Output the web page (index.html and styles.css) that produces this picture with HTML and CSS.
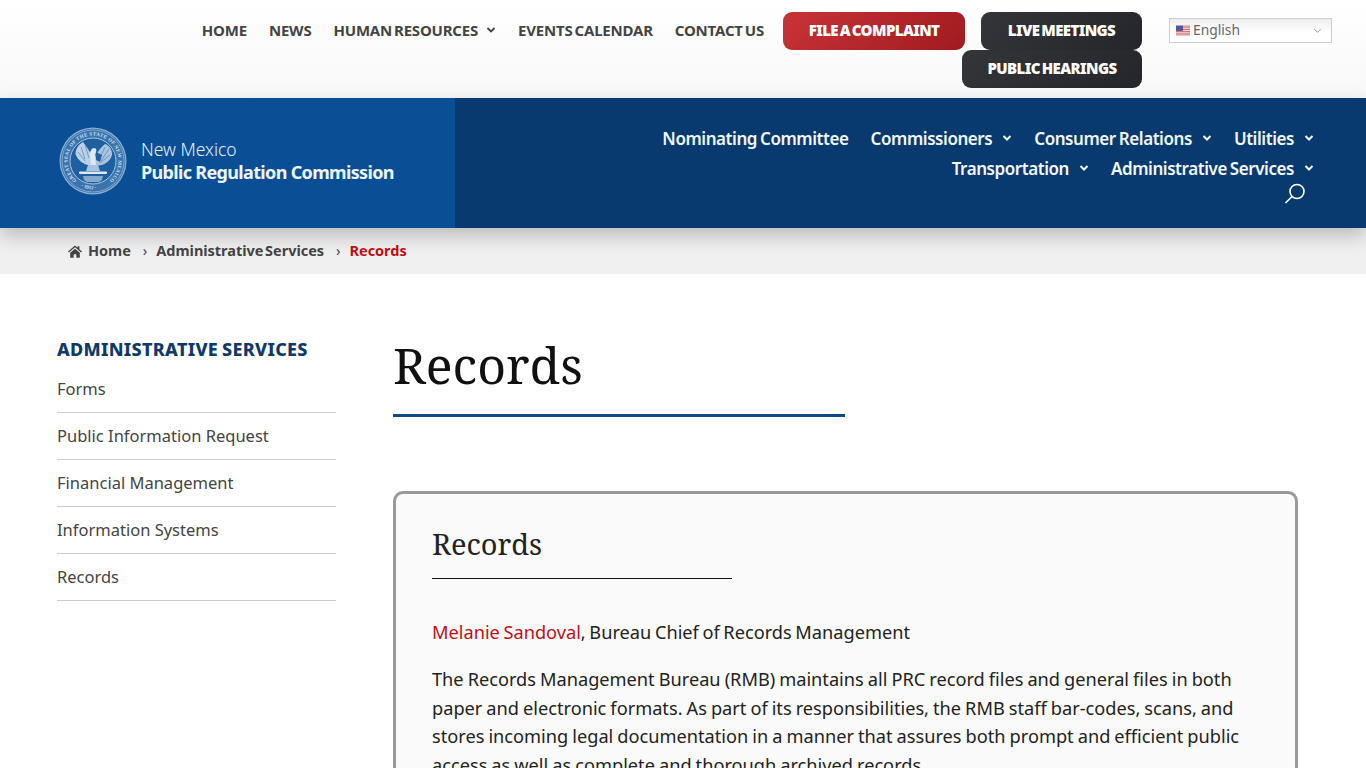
FILE: index.html
```html
<!DOCTYPE html>
<html lang="en">
<head>
<meta charset="utf-8">
<title>Records</title>
<link rel="stylesheet" href="styles.css">
</head>
<body>
<header class="topbar">
  <nav class="topnav">
    <a>HOME</a>
    <a>NEWS</a>
    <a class="has-caret">HUMAN RESOURCES
      <svg class="caret" viewBox="0 0 10 6"><path d="M1.5 1l3.500 3.500L8.500 1" /></svg>
    </a>
    <a>EVENTS CALENDAR</a>
    <a>CONTACT US</a>
  </nav>
  <div class="actions">
    <a class="btn btn-red">FILE A COMPLAINT</a>
    <a class="btn btn-dark btn-live">LIVE MEETINGS</a>
    <a class="btn btn-dark btn-hearings">PUBLIC HEARINGS</a>
  </div>
  <div class="lang">
    <svg class="flag" viewBox="0 0 16 11">
      <rect width="16" height="11" fill="#fff"/>
      <path d="M0 .5h16M0 2.500h16M0 4.500h16M0 6.500h16M0 8.500h16M0 10.500h16" stroke="#c8464f" stroke-width="1"/>
      <rect width="8" height="6" fill="#4a5a9a"/>
    </svg>
    <span>English</span>
    <svg class="lang-caret" viewBox="0 0 10 6"><path d="M1.5 1l3.500 3.500L8.500 1"/></svg>
  </div>
</header>

<section class="brandbar">
  <div class="brand">
    <svg class="seal" viewBox="0 0 68 68">
      <defs>
        <path id="sealring" d="M17.600 53.500A25.500 25.500 0 1 1 50.400 53.500"/>
        <path id="sealbottom" d="M16 56A28.500 28.500 0 0 0 52 56"/>
      </defs>
      <circle cx="34" cy="34" r="33.500" fill="#8fb0d0"/>
      <circle cx="34" cy="34" r="32.300" fill="#3a74ae"/>
      <circle cx="34" cy="34" r="31" fill="none" stroke="#9dbbd8" stroke-width=".7"/>
      <circle cx="34" cy="34" r="23" fill="#1d5f9f" stroke="#a9c4dd" stroke-width="1"/>
      <text class="seal-text"><textPath href="#sealring" textLength="124">GREAT SEAL OF THE STATE OF NEW MEXICO</textPath></text>
      <text class="seal-text"><textPath href="#sealbottom" startOffset="7">· 1912 ·</textPath></text>
      <path d="M33 38C26 39 19 34 16.500 27 16.500 22 20 17 24 15 27 19 31 24 33 30z" fill="#bcd1e5"/>
      <path d="M36 38C43 40 51 35 53 28 53.500 23 50 18 46 17 43 19 38 25 36 30z" fill="#a9c4dd"/>
      <path d="M22 20l4 12M26 18l4 13M19 25l7 9M46 20l-5 11M50 22l-8 12M51 28l-10 8" stroke="#6796c4" stroke-width=".9" fill="none"/>
      <path d="M31 27c0-3 2-6 4-6s3 2 2 4l-1 4 1 9h-5z" fill="#dce8f2"/>
      <path d="M37 25l6 3-2 7-4-2z" fill="#235f9c"/>
      <path d="M29 38h10l2 6H27z" fill="#a8c3dc"/>
      <rect x="20" y="44.500" width="28" height="2.600" rx="1" fill="#dce8f2"/>
      <path d="M24 49h20l-1 4-3 2H28l-3-2z" fill="#86a9cb"/>
    </svg>
    <div class="brand-text">
      <div class="brand-state">New Mexico</div>
      <div class="brand-name">Public Regulation Commission</div>
    </div>
  </div>
  <nav class="mainnav">
    <div class="mainrow">
      <a>Nominating Committee</a>
      <a>Commissioners <svg class="caret" viewBox="0 0 10 6"><path d="M1.5 1l3.500 3.500L8.500 1"/></svg></a>
      <a>Consumer Relations <svg class="caret" viewBox="0 0 10 6"><path d="M1.5 1l3.500 3.500L8.500 1"/></svg></a>
      <a>Utilities <svg class="caret" viewBox="0 0 10 6"><path d="M1.5 1l3.500 3.500L8.500 1"/></svg></a>
    </div>
    <div class="mainrow">
      <a>Transportation <svg class="caret" viewBox="0 0 10 6"><path d="M1.5 1l3.500 3.500L8.500 1"/></svg></a>
      <a>Administrative Services <svg class="caret" viewBox="0 0 10 6"><path d="M1.5 1l3.500 3.500L8.500 1"/></svg></a>
    </div>
    <div class="searchrow">
      <svg class="search" viewBox="0 0 22 22"><circle cx="13" cy="8.500" r="7"/><path d="M8 13.500L1.500 20"/></svg>
    </div>
  </nav>
</section>

<div class="crumbs">
  <svg class="home" viewBox="0 0 16 14"><path d="M8 0L0 7l1 1 7-6 7 6 1-1-3-2.600V1h-2v1.700zM2.500 8.500V14H6.500V10h3v4h4V8.500L8 3.800z"/></svg>
  <a class="crumb">Home</a>
  <span class="sep">›</span>
  <a class="crumb">Administrative Services</a>
  <span class="sep">›</span>
  <a class="crumb crumb-current">Records</a>
</div>

<main class="page">
  <aside class="side">
    <h2 class="side-title">ADMINISTRATIVE SERVICES</h2>
    <ul class="side-list">
      <li>Forms</li>
      <li>Public Information Request</li>
      <li>Financial Management</li>
      <li>Information Systems</li>
      <li>Records</li>
    </ul>
  </aside>
  <article class="content">
    <h1 class="title">Records</h1>
    <div class="card">
      <h2 class="card-title">Records</h2>
      <p class="lead"><a class="link">Melanie Sandoval</a>, Bureau Chief of Records Management</p>
      <p class="body">The Records Management Bureau (RMB) maintains all PRC record files and general files in both paper and electronic formats. As part of its responsibilities, the RMB staff bar-codes, scans, and stores incoming legal documentation in a manner that assures both prompt and efficient public access as well as complete and thorough archived records.</p>
    </div>
  </article>
</main>
</body>
</html>
```
FILE: styles.css
```css
* { box-sizing: border-box; }
html, body { margin: 0; height: 768px; overflow: hidden; }
body { background: #fff; font-family: "Noto Sans", "Open Sans", sans-serif; color: #333; }
a { color: inherit; text-decoration: none; }

.topbar { height: 98px; display: flex; align-items: flex-start; justify-content: flex-end; padding: 12px 34px 0 0; background: linear-gradient(#fff, #f8f8f8); }
.topnav { display: flex; gap: 22px; height: 36px; align-items: center; font-weight: 700; font-size: 15px; letter-spacing: -.2px; word-spacing: -1.700px; color: #444; margin-right: 19px; }
.has-caret { display: flex; align-items: center; gap: 8px; }
.caret { width: 10px; height: 6px; fill: none; stroke: currentColor; stroke-width: 1.800; }

.actions { width: 359px; display: flex; flex-wrap: wrap; justify-content: flex-end; gap: 0 16px; }
.btn { height: 38px; border-radius: 9px; display: flex; align-items: center; justify-content: center; padding-bottom: 2px; font-weight: 900; font-size: 15px; letter-spacing: -.6px; word-spacing: -1.500px; color: #fff; }
.btn-red { width: 182px; background: linear-gradient(135deg, #c93338, #9f1b1f); }
.btn-dark { background: linear-gradient(135deg, #343539, #25262b); }
.btn-live { width: 161px; }
.btn-hearings { width: 180px; }

.lang { width: 163px; height: 25px; margin: 6px 0 0 27px; border: 1px solid #ccc; background: linear-gradient(#eee, #fff 60%); display: flex; align-items: center; padding: 0 9px 2px 6px; font-size: 13.800px; color: #666; }
.flag { width: 14px; height: 11px; margin: 2px 3px 0 0; }
.lang span { flex: 1; }
.lang-caret { width: 9px; height: 6px; fill: none; stroke: #888; stroke-width: 1; margin-top: 2px; }

.brandbar { position: relative; z-index: 2; height: 130px; display: flex; background: #083a6f; box-shadow: 0 8px 18px rgba(0,0,0,.22); }
.brand { width: 455px; background: #0a4f96; display: flex; align-items: center; padding: 0 0 4px 59px; gap: 14px; }
.seal { width: 68px; height: 68px; flex: none; }
.seal-text { font-family: "Liberation Serif", serif; font-size: 5px; font-weight: 700; fill: #d5e2ef; }
.brand-text { color: #fff; margin-top: -1px; }
.brand-state { font-size: 17.500px; font-weight: 300; line-height: 23px; color: #e8f0f7; }
.brand-name { font-size: 18px; font-weight: 700; line-height: 23px; letter-spacing: -.66px; color: #eef4f9; }

.mainnav { flex: 1; padding: 25px 52px 0 0; color: #f2f6fa; font-weight: 600; font-size: 17px; }
.mainrow { display: flex; justify-content: flex-end; gap: 22px; height: 30px; align-items: center; word-spacing: -1px; letter-spacing: -.44px; }
.mainrow a { display: flex; align-items: center; gap: 10px; }
.mainrow .caret { stroke-width: 2; }
.searchrow { display: flex; justify-content: flex-end; padding-right: 8px; }
.search { width: 22px; height: 22px; fill: none; stroke: #fff; stroke-width: 1.600; }

.crumbs { height: 46px; background: #f0f0f0; display: flex; align-items: center; padding: 0 0 2px 68px; font-weight: 700; font-size: 14.500px; color: #444; word-spacing: -2px; }
.home { width: 14px; height: 13px; fill: #444; margin: 2px 6px 0 0; }
.sep { font-weight: 400; margin: 0 9px 0 12px; }
.crumb { letter-spacing: -.03px; }
.crumb-current { color: #c20e14; }

.page { display: flex; padding: 0 68px 0 57px; }
.side { width: 279px; flex: none; margin-right: 57px; padding-top: 63px; }
.side-title { margin: 0; font-size: 18px; line-height: 24px; font-weight: 800; color: #0e3a6b; letter-spacing: .3px; word-spacing: -1px; }
.side-list { list-style: none; margin: 0; padding: 0; font-size: 16.500px; }
.side-list li { height: 47px; line-height: 46px; border-bottom: 1px solid #ccc; color: #444; }
.side-list li:first-child { height: 52px; line-height: 56px; }

.content { flex: 1; }
.title { margin: 0; padding: 59px 0 0; height: 143px; font-family: "Noto Serif", "DejaVu Serif", "Liberation Serif", serif; font-weight: 400; font-size: 50px; line-height: 64px; color: #111; position: relative; }
.title::after { content: ""; position: absolute; left: 0; top: 140px; width: 452px; height: 3px; background: #0e4a8a; }
.card { margin-top: 74px; height: 400px; border: 3px solid #999; border-radius: 10px; background: #fafafa; padding: 0 36px; color: #222; }
.card-title { margin: 0; padding-top: 29px; height: 85px; width: 300px; border-bottom: 1px solid #111; font-family: "Noto Serif", "DejaVu Serif", "Liberation Serif", serif; font-weight: 400; font-size: 29px; line-height: 42px; color: #222; }
.lead { margin: 39px 0 0; font-size: 18.200px; line-height: 28px; word-spacing: -1.100px; }
.link { color: #c20e14; }
.body { margin: 19px 0 0; font-size: 18.200px; line-height: 28.500px; word-spacing: -.7px; }
```
